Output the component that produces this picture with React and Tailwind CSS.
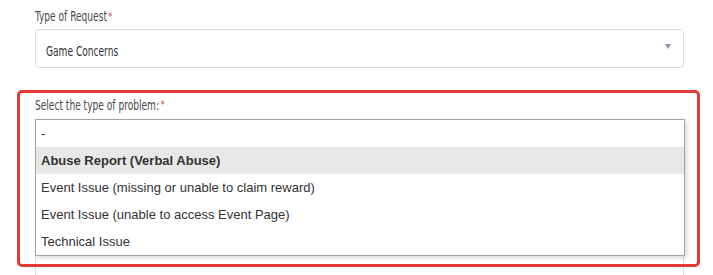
import React from "react";

const options = [
  { label: "-", active: false },
  { label: "Abuse Report (Verbal Abuse)", active: true },
  { label: "Event Issue (missing or unable to claim reward)", active: false },
  { label: "Event Issue (unable to access Event Page)", active: false },
  { label: "Technical Issue", active: false },
];

const narrow =
  "inline-block origin-left scale-x-[0.72] whitespace-nowrap font-['DejaVu_Sans_Condensed','DejaVu_Sans',sans-serif]";

export default function App() {
  return (
    <div className="relative w-[713px] h-[275px] overflow-hidden bg-white pl-[35px] pr-[29px] pt-[8px]">
      {/* type of request */}
      <div className="h-[15px] text-[14px] leading-[15px] text-[#4a4a4a]">
        <span className={narrow}>
          Type of Request
          <span className="ml-[2px] align-top text-[11px] text-[#e02424]">*</span>
        </span>
      </div>
      <div className="mt-[6px] h-[39px] flex items-center justify-between border border-[#dcdcdc] rounded-[4px] pl-[10px] pr-[12px]">
        <span className={`${narrow} pt-[5px] text-[14px] text-[#333]`}>Game Concerns</span>
        <span className="mb-[4px] w-0 h-0 border-l-[3px] border-r-[3px] border-t-[5px] border-l-transparent border-r-transparent border-t-[#8795a8]"></span>
      </div>

      {/* problem type */}
      <div className="mt-[29px] h-[16px] text-[14px] leading-[16px] text-[#4a4a4a]">
        <span className={narrow}>
          Select the type of problem:
          <span className="ml-[3px] align-top text-[11px] text-[#e02424]">*</span>
        </span>
      </div>
      <div className="relative mt-[6px] h-[200px] border border-[#dcdcdc] rounded-[4px]">
        {/* open dropdown */}
        <div className="absolute -left-[1px] -top-[1px] w-[650px] border border-[#a3a3a3] bg-white shadow-[2px_2px_4px_rgba(0,0,0,0.15)] font-['Liberation_Sans',Arial,sans-serif] text-[13px] text-[#333]">
          {options.map((o) => (
            <div
              key={o.label}
              className={`h-[27px] flex items-center pl-[5px] ${
                o.active ? "bg-[#e8e8e8] font-bold" : ""
              }`}
            >
              {o.label}
            </div>
          ))}
        </div>
      </div>

      {/* highlight frame */}
      <div className="pointer-events-none absolute left-[17px] top-[90px] w-[683px] h-[177px] border-[3px] border-[#e53935] rounded-[5px]"></div>
    </div>
  );
}
